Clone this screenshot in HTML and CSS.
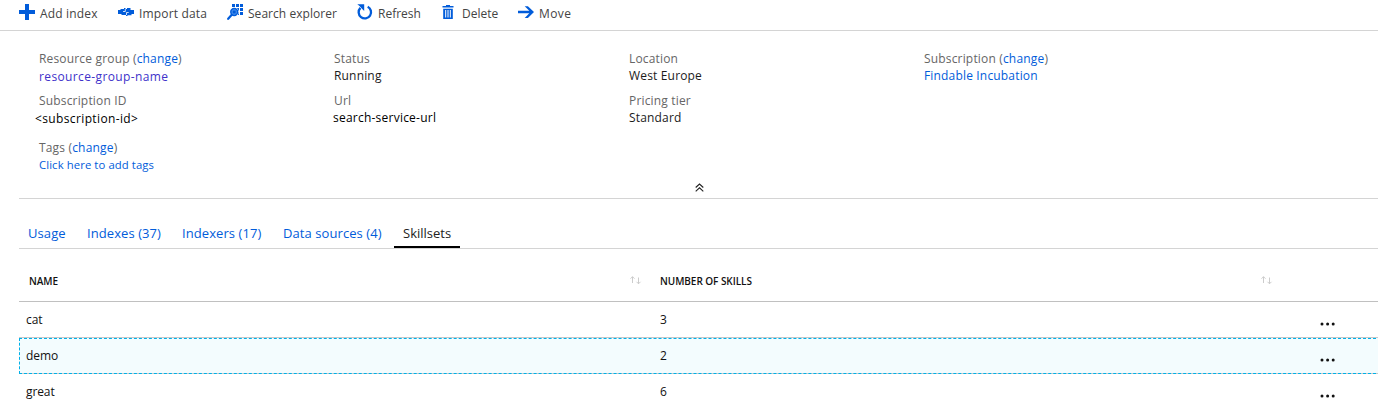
FILE: index.html
```html
<!DOCTYPE html>
<html lang="en">
<head>
<meta charset="utf-8">
<title>Search service</title>
<link rel="stylesheet" href="styles.css">
</head>
<body>
<nav class="toolbar">
  <a class="tool add"><svg class="icon" viewBox="0 0 16 16"><path d="M6 0h4v6h6v4h-6v6H6v-6H0V6h6z"/></svg><span>Add index</span></a>
  <a class="tool import"><svg class="icon" viewBox="0 0 16 16"><path d="M0 6h2.500V5H6V4h1.500v1H9V4h3.500v2H16v4h-2.500v1.200H9.500V12H8v-1H3.500v-1H0z"/><path d="M7.300 5v2.500H5M8.500 11V8.500h2.200" fill="none" stroke="#fff" stroke-width=".8"/></svg><span>Import data</span></a>
  <a class="tool search"><svg class="icon" viewBox="0 0 16 16"><path d="M5 0h3v3H5zM9 0h3v3H9zM13 0h3v3h-3zM13 4h3v3h-3zM13 8h3v3h-3zM9 4h3v3H9zM9 8h3v3H9z"/><circle cx="7.200" cy="8" r="4.600" fill="#fff"/><circle cx="7.200" cy="8" r="3.400" fill="#4c92ee" stroke="#015cda" stroke-width="1.500"/><path d="M5.700 6.500h3v3h-3z"/><path d="m4.500 11-3.300 3.800" fill="none" stroke="#015cda" stroke-width="2.200" stroke-linecap="round"/></svg><span>Search explorer</span></a>
  <a class="tool refresh"><svg class="icon" viewBox="0 0 16 16"><path d="M10.700 2.700a6.200 6.200 0 1 1-7.300 1.200" fill="none" stroke="#015cda" stroke-width="2.300"/><path d="M.300.300H7.200V7L5.200 5 2.700 2.300z"/></svg><span>Refresh</span></a>
  <a class="tool delete"><svg class="icon" viewBox="0 0 16 16"><path d="M1.500 2h3.500V1h4v1h3.500v1.500h-11zM2.200 4.700h9.600V15H2.200z"/><path d="M4.700 6v7.500M7 6v7.500M9.300 6v7.500" stroke="#fff" stroke-width="1"/></svg><span>Delete</span></a>
  <a class="tool move"><svg class="icon" viewBox="0 0 16 16"><path d="M0 6.800h11.300L6.700 2.200h3.200L16 8l-6.100 5.900H6.700l4.600-4.600H0z"/></svg><span>Move</span></a>
</nav>
<main class="content">
  <section class="essentials">
    <div class="facts">
      <div class="fact"><div class="label">Resource group (<a>change</a>)</div><div class="value lowered wide"><a class="visited">resource-group-name</a></div></div>
      <div class="fact"><div class="label">Status</div><div class="value">Running</div></div>
      <div class="fact"><div class="label">Location</div><div class="value">West Europe</div></div>
      <div class="fact"><div class="label">Subscription (<a>change</a>)</div><div class="value"><a>Findable Incubation</a></div></div>
      <div class="fact"><div class="label">Subscription ID</div><div class="value lowered strong wide outdent">&lt;subscription-id&gt;</div></div>
      <div class="fact"><div class="label">Url</div><div class="value strong url">search-service-url</div></div>
      <div class="fact"><div class="label">Pricing tier</div><div class="value">Standard</div></div>
    </div>
    <div class="tags"><div class="label">Tags (<a>change</a>)</div><div class="value small"><a>Click here to add tags</a></div></div>
    <div class="collapse"><svg class="chevrons" viewBox="0 0 9 9"><path d="m.7 4.500 3.800-3.500 3.800 3.500M.7 8.300l3.800-3.500 3.800 3.500"/></svg></div>
  </section>
  <div class="tabs">
    <a class="tab usage">Usage</a><a class="tab indexes">Indexes (37)</a><a class="tab indexers">Indexers (17)</a><a class="tab sources">Data sources (4)</a><a class="tab active">Skillsets</a>
  </div>
  <section class="table">
    <div class="row head"><div class="cell">NAME<svg class="sort" viewBox="0 0 12 9"><path d="M2.500 7V.7M.5 2.700l2-2 2 2M8.500 1.500v6.300M6.500 5.800l2 2 2-2"/></svg></div><div class="cell">NUMBER OF SKILLS<svg class="sort" viewBox="0 0 12 9"><path d="M2.500 7V.7M.5 2.700l2-2 2 2M8.500 1.500v6.300M6.500 5.800l2 2 2-2"/></svg></div></div>
    <div class="row"><div class="cell">cat</div><div class="cell">3</div><svg class="more" viewBox="0 0 15 4"><circle cx="2" cy="2" r="1.500"/><circle cx="7.600" cy="2" r="1.500"/><circle cx="13.200" cy="2" r="1.500"/></svg></div>
    <div class="row selected"><div class="cell">demo</div><div class="cell">2</div><svg class="more" viewBox="0 0 15 4"><circle cx="2" cy="2" r="1.500"/><circle cx="7.600" cy="2" r="1.500"/><circle cx="13.200" cy="2" r="1.500"/></svg></div>
    <div class="row"><div class="cell">great</div><div class="cell">6</div><svg class="more" viewBox="0 0 15 4"><circle cx="2" cy="2" r="1.500"/><circle cx="7.600" cy="2" r="1.500"/><circle cx="13.200" cy="2" r="1.500"/></svg></div>
  </section>
</main>
</body>
</html>
```
FILE: styles.css
```css
* { box-sizing: border-box; }
body { margin: 0; height: 406px; overflow: hidden; background: #fff; color: #1b1b1b; font: 12px/17px "Open Sans", "Noto Sans", sans-serif; letter-spacing: .17px; }
a { color: #015cda; }
.toolbar { display: flex; height: 31px; padding: 4px 0 0 19px; border-bottom: 1px solid #d4d4d4; }
.tool { display: flex; align-items: flex-start; gap: 5px; color: #444; white-space: nowrap; }
.tool span { line-height: 20px; }
.icon { width: 16px; height: 16px; fill: #015cda; flex: none; }
.add { width: 99px; }
.import { width: 109px; }
.search { width: 130px; letter-spacing: .04px; }
.refresh { width: 84px; letter-spacing: 0; }
.delete { width: 77px; letter-spacing: 0; }
.move { letter-spacing: .4px; }
.content { padding-left: 19px; }
.essentials { height: 168px; padding-top: 19px; border-bottom: 1px solid #d4d4d4; }
.facts { display: grid; grid-template-columns: repeat(4, 295px); grid-auto-rows: 42px; padding-left: 20px; }
.fact { white-space: nowrap; }
.label { color: #666; height: 17px; }
.value { height: 17px; }
.lowered { padding-top: 1px; }
.wide { letter-spacing: .37px; }
.visited { color: #4032ca; }
.strong { color: #000; }
.outdent { margin-left: -4px; }
.url { margin-left: -1px; letter-spacing: .23px; }
.tags { padding: 5px 0 0 20px; }
.small { font-size: 11.300px; letter-spacing: .1px; }
.collapse { display: flex; padding: 10px 0 0 676px; }
.chevrons { width: 9px; height: 9px; fill: none; stroke: #222; stroke-width: 1.100; }
.tabs { display: flex; height: 50px; padding-top: 22px; border-bottom: 1px solid #d4d4d4; font-size: 13px; letter-spacing: .08px; }
.tab { height: 27px; padding: 2px 0 0 9px; line-height: 20px; white-space: nowrap; }
.usage { width: 59px; }
.indexes { width: 95px; }
.indexers { width: 101px; }
.sources { width: 120px; }
.active { width: 66px; color: #222; border-bottom: 2px solid #000; letter-spacing: 0; }
.row { display: flex; height: 36px; align-items: center; border-bottom: 1px solid #c8c8c8; padding-left: 7px; color: #111; letter-spacing: -.1px; }
.cell { display: flex; align-items: center; width: 634px; }
.cell + .cell { width: 660px; }
.head { height: 53px; padding: 25px 0 0 10px; font-size: 10px; font-weight: 600; align-items: flex-start; border-color: #c0c0c0; letter-spacing: -.05px; }
.head .cell, .head .cell + .cell { width: 631px; padding-right: 18px; justify-content: space-between; align-items: flex-start; line-height: 14px; }
.sort { width: 12px; height: 9px; margin-top: 2px; fill: none; stroke: #ccc; }
.more { width: 15px; height: 4px; margin-top: 9px; fill: #111; }
.selected { position: relative; background: #f3fcfe; }
.selected::after { content: ""; position: absolute; inset: 0 -3px -1px 0; border: 1px dashed #00b0e8; }
```
